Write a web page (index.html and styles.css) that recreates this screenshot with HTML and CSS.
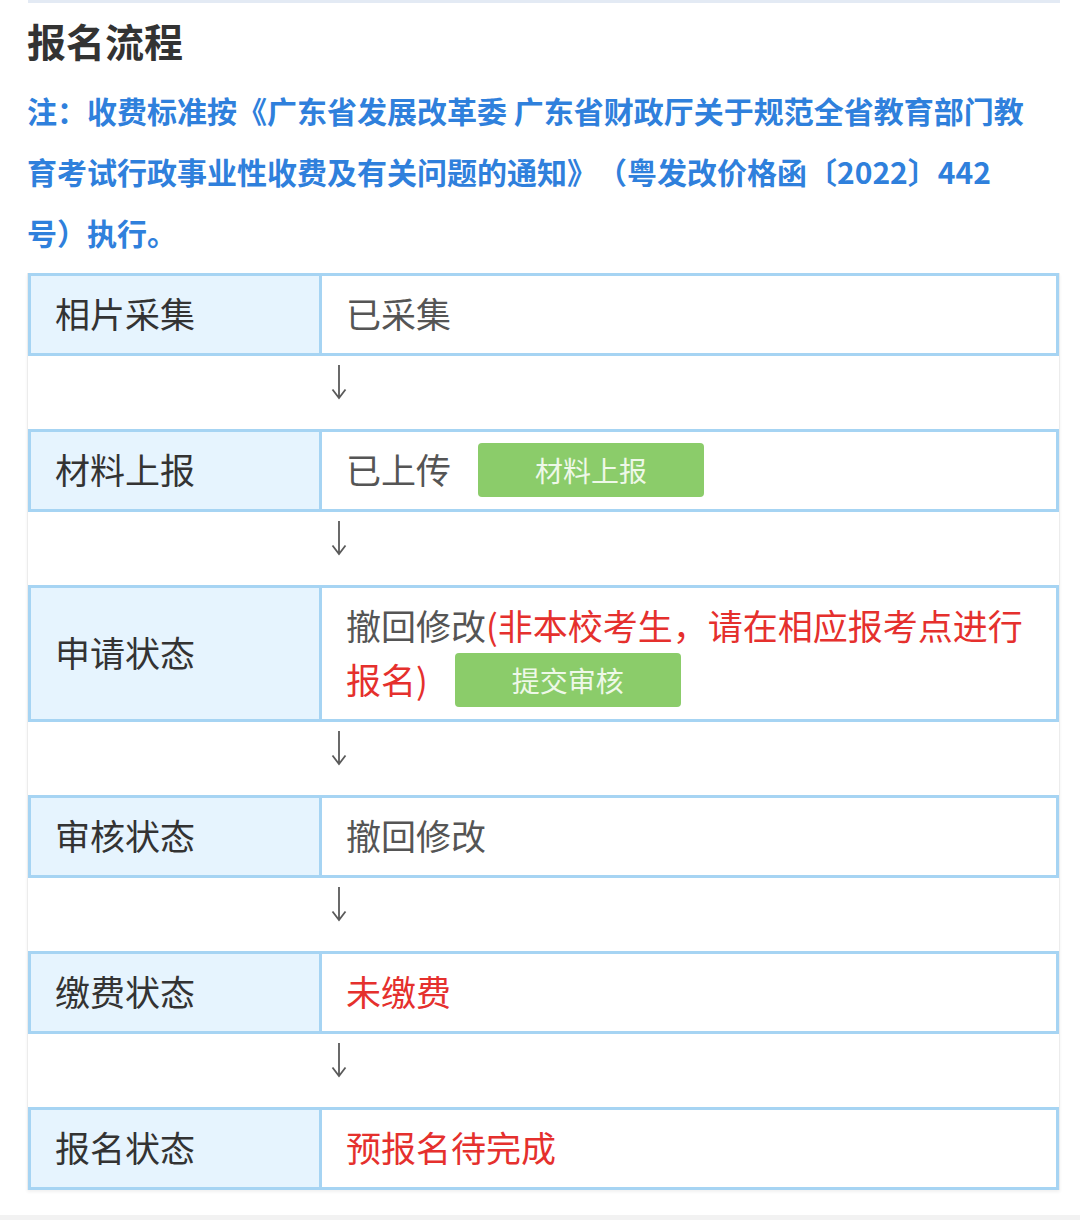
FILE: index.html
```html
<!DOCTYPE html>
<html lang="zh-CN">
<head>
  <meta charset="UTF-8">
  <meta name="viewport" content="width=device-width, initial-scale=1.0">
  <title>报名流程</title>
  <link rel="stylesheet" href="styles.css">
</head>
<body>
  <div class="page">
    <div class="top-edge"></div>

    <h2 class="title">报名流程</h2>
    <p class="note">注：收费标准按《广东省发展改革委 广东省财政厅关于规范全省教育部门教<br>育考试行政事业性收费及有关问题的通知》（粤发改价格函〔2022〕442<br>号）执行。</p>

    <div class="flow">
      <div class="step">
        <div class="step-label">相片采集</div>
        <div class="step-value">已采集</div>
      </div>
      <div class="arrow"><svg width="16" height="36" viewBox="0 0 16 36"><path d="M8 1 V34 M1.5 25.5 L8 34 L14.5 25.5" fill="none" stroke="#5a5a5a" stroke-width="1.8"/></svg></div>

      <div class="step">
        <div class="step-label">材料上报</div>
        <div class="step-value">已上传<button class="btn">材料上报</button></div>
      </div>
      <div class="arrow"><svg width="16" height="36" viewBox="0 0 16 36"><path d="M8 1 V34 M1.5 25.5 L8 34 L14.5 25.5" fill="none" stroke="#5a5a5a" stroke-width="1.8"/></svg></div>

      <div class="step">
        <div class="step-label">申请状态</div>
        <div class="step-value">撤回修改<span class="warn">(非本校考生，请在相应报考点进行报名)</span><button class="btn">提交审核</button></div>
      </div>
      <div class="arrow"><svg width="16" height="36" viewBox="0 0 16 36"><path d="M8 1 V34 M1.5 25.5 L8 34 L14.5 25.5" fill="none" stroke="#5a5a5a" stroke-width="1.8"/></svg></div>

      <div class="step">
        <div class="step-label">审核状态</div>
        <div class="step-value">撤回修改</div>
      </div>
      <div class="arrow"><svg width="16" height="36" viewBox="0 0 16 36"><path d="M8 1 V34 M1.5 25.5 L8 34 L14.5 25.5" fill="none" stroke="#5a5a5a" stroke-width="1.8"/></svg></div>

      <div class="step">
        <div class="step-label">缴费状态</div>
        <div class="step-value warn">未缴费</div>
      </div>
      <div class="arrow"><svg width="16" height="36" viewBox="0 0 16 36"><path d="M8 1 V34 M1.5 25.5 L8 34 L14.5 25.5" fill="none" stroke="#5a5a5a" stroke-width="1.8"/></svg></div>

      <div class="step">
        <div class="step-label">报名状态</div>
        <div class="step-value warn">预报名待完成</div>
      </div>
    </div>
  </div>
  <div class="bottom-band"></div>
</body>
</html>
```

FILE: styles.css
```css
body {
  margin: 0;
  background: #fff;
  font-family: "Noto Sans CJK SC", "Noto Sans", sans-serif;
  color: #333;
  text-spacing-trim: space-all;
}

.page {
  padding: 0 20px 25px 27px;
}

.top-edge {
  height: 3px;
  margin-left: 1px;
  width: 1032px;
  background: #e3eaf4;
}

.title {
  margin: 12px 0 0;
  font-size: 39px;
  line-height: 50px;
  font-weight: 700;
  color: #333;
}

.note {
  margin: 15px 0 0;
  font-size: 30px;
  line-height: 61px;
  font-weight: 700;
  color: #2f80dc;
  white-space: nowrap;
}

/* flow table */
.flow {
  margin-top: 10px;
  width: 1031px;
  border-left: 1px solid #ececec;
  border-right: 1px solid #ececec;
  box-shadow: 0 2px 3px rgba(0, 0, 0, 0.06);
}

.step {
  display: grid;
  grid-template-columns: 291px 1fr;
  border: 3px solid #a6d4f3;
  font-size: 35px;
}

.step-label {
  display: flex;
  align-items: center;
  padding: 0 0 4px 24px;
  background: #e6f4fe;
  border-right: 3px solid #a6d4f3;
  color: #333;
}

.step-value {
  padding: 10px 20px 13px 24px;
  line-height: 54px;
  color: #555;
}

.warn {
  color: #e5302d;
}

.btn {
  display: inline-block;
  vertical-align: top;
  margin: 1px 0 -1px 27px;
  width: 226px;
  height: 54px;
  border: none;
  border-radius: 4px;
  background: #8bcc6a;
  color: #eef8e8;
  font-family: inherit;
  font-size: 28px;
  line-height: 52px;
  padding: 0;
}

.arrow {
  height: 73px;
  box-sizing: border-box;
  display: flex;
  align-items: flex-start;
  padding: 8px 0 0 303px;
}

.arrow svg {
  display: block;
}

.bottom-band {
  height: 8px;
  background: #f2f2f2;
}
```
